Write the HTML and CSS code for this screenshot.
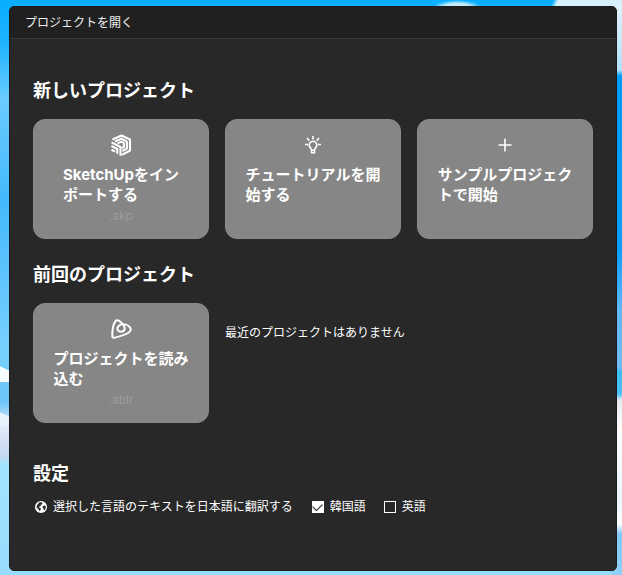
FILE: index.html
```
<!DOCTYPE html>
<html lang="ja">
<head>
  <meta charset="utf-8">
  <title>プロジェクトを開く</title>
  <link rel="stylesheet" href="styles.css">
</head>
<body>
  <main class="window">
    <header class="title-bar">プロジェクトを開く</header>
    <div class="content">
      <section class="section">
        <h2>新しいプロジェクト</h2>
        <div class="cards">
          <button type="button" class="card">
            <svg class="icon" viewBox="0 0 22 22" fill="none" stroke="currentColor" stroke-width="2.1" stroke-linejoin="round">
              <path d="M2.500 5.500 11.500 1.500 20 5.500v11L12 20.800"/>
              <path d="M5 7.500 11.500 4.600l5.400 3v7L12.500 17"/>
              <path d="M7.500 9.400 11.500 7.600l2.400 1.500v4L12 14"/>
              <path d="M1.500 8.400 10.500 13v8.800M1.500 12 7.300 15v4.700M1.500 15.800 5 17.600"/>
            </svg>
            <span class="card-label">SketchUpをイン<br>ポートする</span>
            <span class="card-ext">.skp</span>
          </button>
          <button type="button" class="card">
            <svg class="icon" viewBox="0 0 22 22" fill="none" stroke="currentColor" stroke-width="1.600">
              <path d="M11 7.200a3.800 3.800 0 0 0-2.800 6.400l1.300 2.200v3h3v-3l1.300-2.200A3.800 3.800 0 0 0 11 7.200zM9.500 16.300h3"/>
              <path d="M11 2v3.500M3 10.500h3M16 10.500h3M5 4l2.300 2.800M17 4l-2.300 2.800"/>
            </svg>
            <span class="card-label">チュートリアルを開<br>始する</span>
          </button>
          <button type="button" class="card">
            <svg class="icon" viewBox="0 0 22 22" fill="none" stroke="currentColor" stroke-width="1.600">
              <path d="M11 4.500v13M4.500 11h13"/>
            </svg>
            <span class="card-label">サンプルプロジェク<br>トで開始</span>
          </button>
        </div>
      </section>

      <section class="section">
        <h2>前回のプロジェクト</h2>
        <div class="cards">
          <button type="button" class="card">
            <svg class="icon" viewBox="0 0 24 24" fill="none" stroke="currentColor" stroke-width="2.200" stroke-linecap="round" stroke-linejoin="round">
              <path d="M2.500 19C2.500 13 4 6 6 3.400 8 1 11 3 14.500 7.500 17 11 16.500 14.500 12.500 15 9 15.400 7.200 12.500 8.500 10 10 7 14 6.200 17.500 7.200 21 8.300 23 11.500 22.500 13.500 21.500 17.500 9 20.500 5 21.500 3 22 2.400 21 2.500 19z"/>
            </svg>
            <span class="card-label">プロジェクトを読み<br>込む</span>
            <span class="card-ext">.ablr</span>
          </button>
          <p class="empty">最近のプロジェクトはありません</p>
        </div>
      </section>

      <section class="settings">
        <h2>設定</h2>
        <div class="language">
          <svg class="globe" viewBox="0 0 16 16">
            <circle cx="8" cy="8" r="8" fill="#fff"/>
            <path fill="#282828" d="M5.500 2 9 1.500 10 3.500 8 5 7 7.200 4.800 7.500l1 1.500 2 .8-.3 2.200L6 13.500 4.500 10.500 2 8.500l.5-2.500zM11 6.500l2.500-.5 1 2-.8 3-1.700 1.500-.8-2.500L9.800 8z"/>
          </svg>
          <span>選択した言語のテキストを日本語に翻訳する</span>
          <label class="option"><input type="checkbox" checked>韓国語</label>
          <label class="option"><input type="checkbox">英語</label>
        </div>
      </section>
    </div>
  </main>
</body>
</html>
```
FILE: styles.css
```
* {
  box-sizing: border-box;
}
body {
  margin: 0;
  min-height: 100vh;
  padding: 6px 5px 4px 9px;
  display: flex;
  font-family: Inter, "Noto Sans CJK JP", sans-serif;
  font-size: 12px;
  line-height: 18px;
  color: #fff;
  /* sky: clouds along the edges over a blue fade */
  background:
    linear-gradient(115deg, transparent 14%, #d8f0fb 20%) right top / 80px 6px no-repeat,
    radial-gradient(ellipse at bottom, #c4ecfc 40%, transparent 70%) right 140px top / 50px 8px no-repeat,
    linear-gradient(#e4f3fc 0, #b4e0fa 70px, #009cff 76px, #0a9eff 250px, #62b8fa 310px, #6fbcf8 368px, #3fbcf8 371px, #4cc0fa 394px, #e8eaec 400px, #fff 430px, #e8f5fd 500px, #fff 524px, #80c8fc 534px, #8fd0fa 100%) right top / 10px 100% no-repeat,
    linear-gradient(205deg, transparent 50%, #f6fbfe 52%) left 354px / 9px 28px no-repeat,
    linear-gradient(205deg, transparent 50%, #e8f2fc 52%) left 402px / 9px 24px no-repeat,
    linear-gradient(#08aeff 0, #1cb2ff 40px, #6accff 100px, #44b8fb 200px, #78d0ff 350px, #6cc4f8 402px, #e0eaf8 426px, #c8d8f0 455px, #a0e4ff 465px, #98dcfc 100%);
}
.window {
  flex: 1;
  border: 1px solid #1c1c1c;
  border-radius: 5px;
  background: #282828;
  overflow: hidden;
}
.title-bar {
  padding: 7px 15px 6px;
  border-bottom: 1px solid #363636;
  background: #202020;
  color: #f0f0f0;
}
.content {
  padding: 40px 23px 24px;
}
.section {
  margin-bottom: 24px;
}
h2 {
  margin: 0 0 16px;
  font-size: 18px;
  line-height: 24px;
  font-weight: 700;
}
.cards {
  display: flex;
  gap: 16px;
}
.card {
  display: flex;
  flex-direction: column;
  align-items: center;
  width: 176px;
  height: 120px;
  padding: 14px 0 0;
  border: 1px solid #8a8a8a;
  border-radius: 12px;
  background: #868686;
  color: #fff;
  font: inherit;
  cursor: pointer;
}
.card:hover {
  background: #8e8e8e;
}
.icon {
  width: 22px;
  height: 22px;
  margin-bottom: 9px;
}
.card-label {
  font-size: 15px;
  line-height: 20px;
  font-weight: 700;
  text-align: left;
}
.card-ext {
  margin-top: 2px;
  color: #9c9c9c;
}
.empty {
  margin: 21px 0 0;
}
.settings {
  margin-top: 39px;
}
.settings h2 {
  margin-bottom: 12px;
}
.language {
  display: flex;
  align-items: center;
  padding-left: 2px;
}
.globe {
  width: 12px;
  height: 12px;
  margin-right: 6px;
}
.option {
  display: flex;
  align-items: center;
  gap: 6px;
  margin-left: 18px;
}
.language span {
  margin-right: 1px;
}
.option input {
  appearance: none;
  display: grid;
  place-items: center;
  width: 12px;
  height: 12px;
  margin: 0;
  border: 1px solid #fff;
}
.option input:checked {
  background: #fff;
}
.option input:checked::before {
  content: "";
  width: 8px;
  height: 5px;
  margin-bottom: 3px;
  border: solid #222;
  border-width: 0 0 1px 1px;
  transform: rotate(-45deg);
}
```
